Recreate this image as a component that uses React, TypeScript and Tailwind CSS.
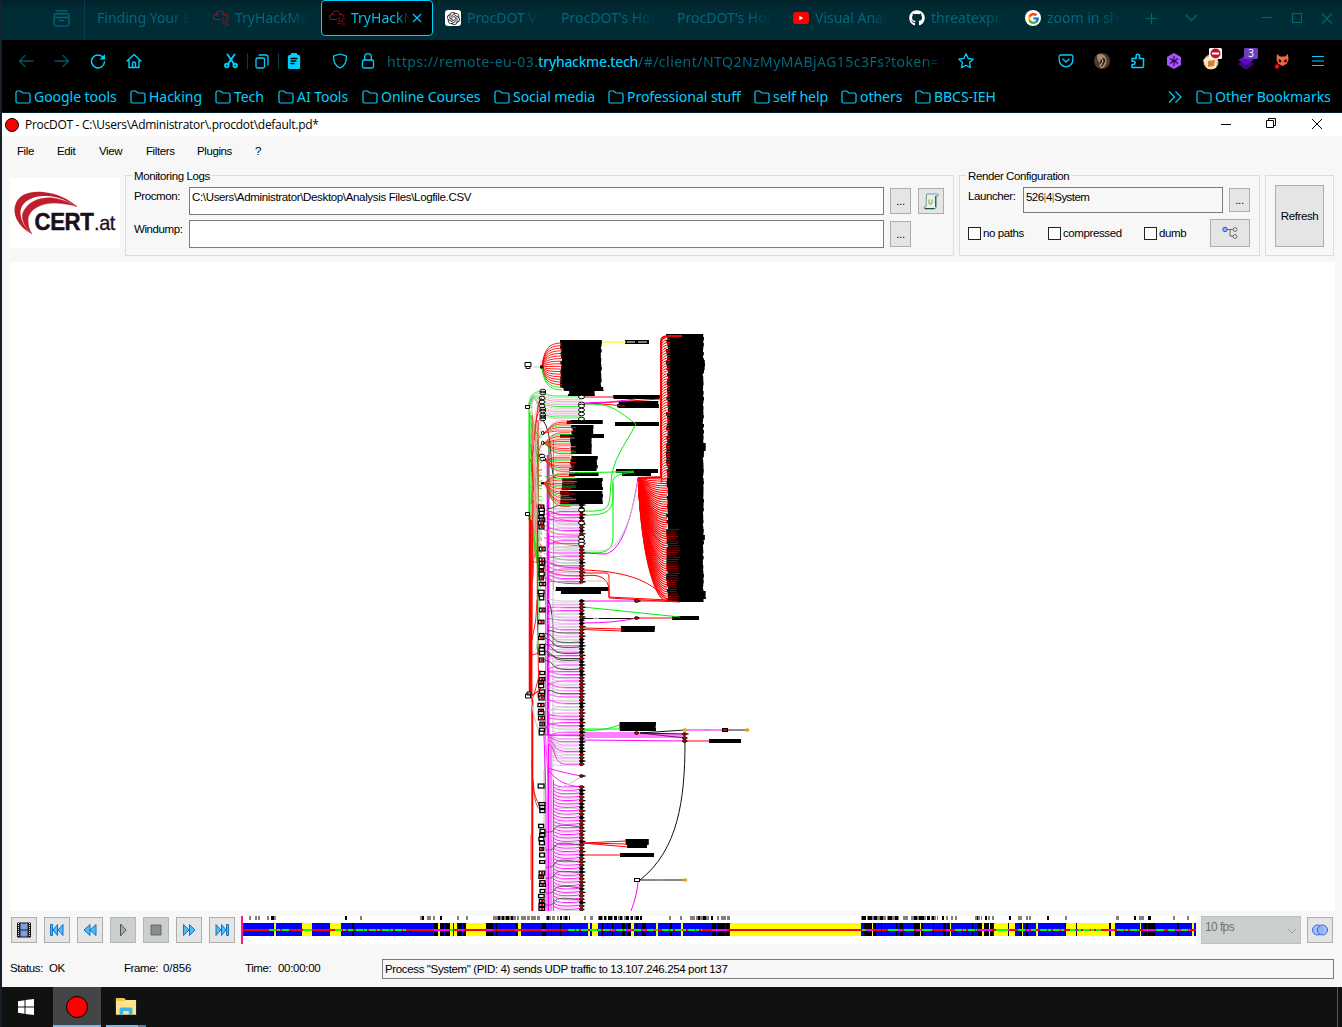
import React from "react";
import { SiTryhackme, SiOpenai } from "react-icons/si";
import { FaGithub } from "react-icons/fa";
import { FcGoogle } from "react-icons/fc";

const CY = "#00d0ff";

/* ---------- browser chrome ---------- */

function Icon({ children, size = 16, color = CY, w = 1.3 }: { children: React.ReactNode; size?: number; color?: string; w?: number }) {
  return (
    <svg width={size} height={size} viewBox="0 0 16 16" fill="none" stroke={color} strokeWidth={w} strokeLinecap="round" strokeLinejoin="round" className="shrink-0">
      {children}
    </svg>
  );
}

function Tab({ icon, label, active }: { icon?: React.ReactNode; label: string; active?: boolean }) {
  return (
    <div className="w-[116px] h-[40px] px-[2px] shrink-0">
      <div className={active ? "h-[36px] rounded-[4px] border border-[#00d0ff] bg-black flex items-center pl-[7px] pr-[10px]" : "h-[36px] flex items-center pl-[8px] pr-[8px]"}>
        {icon && <span className="w-4 h-4 mr-[6px] shrink-0 flex items-center justify-center">{icon}</span>}
        <span
          className={
            active
              ? "flex-1 h-5 leading-5 overflow-hidden whitespace-nowrap text-[14px] bg-linear-to-r from-[#00c8f5] from-75% to-black bg-clip-text text-transparent"
              : "flex-1 h-5 leading-5 overflow-hidden whitespace-nowrap text-[14px] bg-linear-to-r from-[#00687f] from-75% to-[#002a33] bg-clip-text text-transparent"
          }
        >
          {label}
        </span>
        {active && (
          <svg width="10" height="10" viewBox="0 0 10 10" stroke={CY} strokeWidth="1.1" className="shrink-0">
            <path d="M1 1l8 8M9 1l-8 8" />
          </svg>
        )}
      </div>
    </div>
  );
}

function TabStrip() {
  const thm = <SiTryhackme size={17} color="#b5141c" />;
  return (
    <div className="h-[40px] flex bg-linear-to-b from-[#00222a] to-[#002c36] to-30%">
      <div className="w-[83px] h-[40px] border-r border-[#003e4b] flex justify-center pl-[37px] pt-[10px]">
        <Icon size={17} color="#00647a">
          <path d="M3 .8h10M2.500 3.500h11A1.500 1.500 0 0 1 15 5v2H1V5a1.500 1.500 0 0 1 1.500-1.500zM1 7v6.500A1.700 1.700 0 0 0 2.700 15.200h10.600A1.700 1.700 0 0 0 15 13.500V7M6 10h4" />
        </Icon>
      </div>
      <div className="w-[2px]" />
      <Tab label="Finding Your E" />
      <Tab icon={thm} label="TryHackMe" />
      <Tab icon={thm} label="TryHackM" active />
      <Tab icon={<span className="w-4 h-4 rounded-[3px] bg-white flex items-center justify-center"><SiOpenai size={13} color="#222" /></span>} label="ProcDOT V" />
      <Tab label="ProcDOT's Hom" />
      <Tab label="ProcDOT's Hom" />
      <Tab icon={<svg width="16" height="12" viewBox="0 0 16 12"><rect width="16" height="12" rx="3" fill="#f00" /><path d="M6.400 3.700v4.600L10.200 6z" fill="#fff" /></svg>} label="Visual Anal" />
      <Tab icon={<FaGithub size={16} color="#fff" />} label="threatexpre" />
      <Tab icon={<span className="w-4 h-4 rounded-full bg-white flex items-center justify-center"><FcGoogle size={13} /></span>} label="zoom in she" />
      <div className="flex-1 h-[36px] flex items-center pl-[14px]">
        <svg width="190" height="14" viewBox="1145 11 190 14" fill="none" stroke="#00647a" strokeWidth="1.2">
          <path d="M1151.5 13v11M1146 18.5h11M1186 15l5.5 5.500 5.500-5.500M1262 17.500h10M1292.500 13.500h9v9h-9zM1322 13.500l10 10M1332 13.500l-10 10" />
        </svg>
      </div>
    </div>
  );
}

function Cell({ children }: { children: React.ReactNode }) {
  return <div className="w-[36px] h-[42px] flex items-center justify-center shrink-0">{children}</div>;
}

function Toolbar() {
  return (
    <div className="h-[42px] flex items-center pl-[6px]">
      <Cell><Icon color="#00566a"><path d="M15 8H1.500M7 2.500L1.500 8 7 13.500" /></Icon></Cell>
      <Cell><Icon color="#00566a"><path d="M1 8h13.500M9 2.500L14.500 8 9 13.500" /></Icon></Cell>
      <Cell><Icon w={1.5}><path d="M13.200 4.500A6.500 6.500 0 1 0 14.500 9" /><path d="M15 1v5.500H9.500z" fill={CY} stroke="none" /></Icon></Cell>
      <Cell><Icon w={1.4}><path d="M1 8l7-6.500L15 8M3 7v7.500h10V7M6.500 14.500v-4a1.500 1.500 0 0 1 3 0v4" /></Icon></Cell>
      <div className="w-[71px]" />
      <Icon w={1.9}><path d="M4.500 1.500L11 11M11.500 1.500L5 11" /><circle cx="3.800" cy="12.500" r="1.800" /><circle cx="12.200" cy="12.500" r="1.800" /></Icon>
      <div className="w-px h-4 bg-[#003e4b] ml-[8px] mr-[6px]" />
      <Icon><rect x="2" y="5" width="8.500" height="10" rx="1.500" /><path d="M5 2h7a2 2 0 0 1 2 2v8" /></Icon>
      <div className="w-px h-4 bg-[#003e4b] ml-[8px] mr-[7px]" />
      <Icon><rect x="2.500" y="2.500" width="11" height="13" rx="1.500" fill={CY} /><rect x="5.500" y="0.500" width="5" height="3" rx="1" fill={CY} /><path d="M5 5.500h6M5 8h5M5 10.500h3" stroke="#000" /></Icon>
      <div className="w-[30px]" />
      <Icon><path d="M8 1l6.500 2.200C14.700 9 12.500 13 8 15 3.500 13 1.300 9 1.500 3.200z" /></Icon>
      <div className="w-[12px]" />
      <Icon><rect x="2.500" y="7" width="11" height="8" rx="1.500" /><path d="M4.700 7V4a3.300 3.300 0 0 1 6.600 0v3" /></Icon>
      <div className="w-[564px] ml-[11px] text-[14px] tracking-[0.47px] whitespace-nowrap overflow-hidden bg-linear-to-r from-[#006a80] from-95% to-black bg-clip-text text-transparent">
        https://remote-eu-03.<span className="text-[#00d0ff] tracking-[-0.15px]">tryhackme.tech</span>/#/client/NTQ2NzMyMABjAG15c3Fs?token=1
      </div>
      <div className="w-[7px]" />
      <Icon><path d="M8 .8l2.200 4.700 5.100.6-3.800 3.500 1 5.100L8 12.200l-4.500 2.500 1-5.100L.7 6.100l5.100-.6z" /></Icon>
      <div className="flex-1" />
      <Cell><Icon><path d="M2.500 2h11a1.300 1.300 0 0 1 1.300 1.300V7A6.800 6.800 0 0 1 1.200 7V3.300A1.300 1.300 0 0 1 2.500 2zM4.800 6L8 9l3.200-3" /></Icon></Cell>
      <Cell>
        <svg width="16" height="16" viewBox="0 0 16 16"><circle cx="8" cy="8" r="8" fill="#4e3a2a" /><path d="M3 2q6-3 9 3 2 6-3 10-5 0-3-5-3-2-3-8z" fill="#a98a6c" /><path d="M7 5q5-1 4 4l-3 5-2-4z" fill="#2a1a10" /><path d="M7 4l2 4-2 4" stroke="#d8c4a8" fill="none" /></svg>
      </Cell>
      <Cell><Icon w={1.5}><path d="M2 14.500h10.500a1 1 0 0 0 1-1V5.500H9.500V3a1.700 1.700 0 0 0-3.400 0v2.500H2v2.700h1.500a1.600 1.600 0 0 1 0 3.300H2z" /></Icon></Cell>
      <Cell>
        <svg width="16" height="16" viewBox="0 0 16 16"><path d="M8 0l7 4v8l-7 4-7-4V4z" fill="#a855f7" /><path d="M8 3v10M4 5.500l8 5M12 5.500l-8 5M5.500 8h5" stroke="#2c0a5c" strokeWidth="1.200" /></svg>
      </Cell>
      <Cell>
        <svg width="20" height="22" viewBox="0 0 20 22" className="-mt-[5px] ml-[3px]"><circle cx="9" cy="14" r="7.500" fill="#e8b47c" /><path d="M1 12l5-3 9 2-1 9-8 1z" fill="#f6e7cf" /><path d="M6 13l7-1-1 6-6 1z" fill="#d9822b" /><rect x="7" y="0" width="13" height="11" rx="1.500" fill="#fff" /><circle cx="13.500" cy="5.500" r="5" fill="#c4122f" /><rect x="10" y="4.500" width="7" height="2" fill="#fff" /></svg>
      </Cell>
      <Cell>
        <svg width="20" height="22" viewBox="0 0 20 22" className="-mt-[5px] ml-[3px]"><path d="M8 11l8 5-8 6-8-6z" fill="#3b0a80" /><path d="M8 7l8 5-8 5-8-5z" fill="#5c0bc0" /><rect x="6" y="0" width="14" height="11" rx="1.500" fill="#6a3fc0" /><text x="13" y="9" fontSize="10" fill="#fff" textAnchor="middle" fontFamily="Noto Sans">3</text></svg>
      </Cell>
      <Cell>
        <svg width="16" height="16" viewBox="0 0 16 16"><path d="M3 1l3 2.500h5L14 1l.5 6-2 4-4 2-4-2-2-4z" fill="#f4653a" /><path d="M4.500 6l3 1.500-.5 2-2-.5zM12.500 6l-2.500 1.500.5 2 2-.5z" fill="#000" /><circle cx="3" cy="13.500" r="2.200" fill="#f00" /></svg>
      </Cell>
      <Cell>
        <svg width="12" height="12" viewBox="0 0 12 12" stroke={CY} strokeWidth="1.200"><path d="M0 1.500h12M0 6h12M0 10.500h12" /></svg>
      </Cell>
      <div className="w-[6px]" />
    </div>
  );
}

function Folder() {
  return (
    <svg width="16" height="14" viewBox="0 0 16 14" fill="none" stroke={CY} strokeWidth="1.200" className="shrink-0 mr-[3px] mt-px">
      <path d="M1 2.500A1.500 1.500 0 0 1 2.500 1h3L8 3h5.500A1.500 1.500 0 0 1 15 4.500v7a1.500 1.500 0 0 1-1.500 1.500h-11A1.500 1.500 0 0 1 1 11.500z" />
    </svg>
  );
}

function Bookmark({ label, w }: { label: string; w: number }) {
  return (
    <div className="flex items-center whitespace-nowrap shrink-0" style={{ width: w }}>
      <Folder />
      {label}
    </div>
  );
}

const bookmarks: [string, number][] = [
  ["Google tools", 115], ["Hacking", 85], ["Tech", 63], ["AI Tools", 84], ["Online Courses", 132],
  ["Social media", 114], ["Professional stuff", 146], ["self help", 87], ["others", 74], ["BBCS-IEH", 90],
];

function Bookmarks() {
  return (
    <div className="h-[30px] flex items-center pl-[13px] pb-px text-[14px] tracking-[-0.04px] text-[#00d0ff]">
      {bookmarks.map(([l, w]) => <Bookmark key={l} label={l} w={w} />)}
      <div className="flex-1" />
      <svg width="14" height="12" viewBox="0 0 14 12" fill="none" stroke={CY} strokeWidth="1.200" className="mr-[14px]"><path d="M1 .5L6.500 6 1 11.500M7.500 .5L13 6 7.500 11.500" /></svg>
      <Bookmark label="Other Bookmarks" w={146} />
    </div>
  );
}

/* ---------- application window ---------- */

function Group({ title, className, children }: { title?: string; className: string; children: React.ReactNode }) {
  return (
    <div className={"h-[81px] border border-[#dcdcdc] shrink-0 " + className}>
      <div className="h-[11px] pl-[6px]">
        {title && <span className="inline-block h-4 leading-4 -mt-[8px] px-[2px] bg-[#f7f7f7] align-top whitespace-nowrap">{title}</span>}
      </div>
      {children}
    </div>
  );
}

function Btn({ children, className }: { children?: React.ReactNode; className: string }) {
  return <div className={"border border-[#adadad] bg-[#e5e5e5] flex items-center justify-center shrink-0 " + className}>{children}</div>;
}

function Check({ label, className }: { label: string; className: string }) {
  return (
    <div className={"flex items-center whitespace-nowrap shrink-0 " + className}>
      <span className="w-[13px] h-[13px] border border-[#222] bg-white mr-[2px]" />
      {label}
    </div>
  );
}

function CertLogo() {
  return (
    <svg width="110" height="70" viewBox="10 178 110 70" className="bg-white shrink-0">
      <path d="M32 234C17 226 13 214 15 206 18 194 30 191 43 192 57 193 70 200 77 206.500 68 201 57 195.500 45 196 32 196 21 202 20.500 212 20.500 221 25 228 32 234z" fill="#be1e2d" />
      <path d="M32 234C22 225 20 215 25 209 31 200 42 197 53 198 63 199.500 71 203 77 206.500 66 203.500 54 202 45 204 34 207 28 213 28 220 28 225 29 230 32 234z" fill="#be1e2d" stroke="#be1e2d" strokeWidth=".5" />
      <text x="34.500" y="229.500" fontSize="24.500" fontWeight="bold" fill="#1a1118" stroke="#1a1118" strokeWidth=".5" fontFamily="Liberation Sans" textLength="59" lengthAdjust="spacingAndGlyphs">CERT</text>
      <text x="94" y="229.500" fontSize="21" fill="#1a1118" stroke="#1a1118" strokeWidth=".3" fontFamily="Liberation Sans" textLength="21" lengthAdjust="spacingAndGlyphs">.at</text>
    </svg>
  );
}

function Config() {
  return (
    <div className="h-[87px] flex pl-[8px] shrink-0">
      <div className="pt-[3px]"><CertLogo /></div>
      <Group title="Monitoring Logs" className="w-[829px] ml-[5px]">
        <div className="flex pl-[8px]">
          <div className="w-[55px] h-[28px] pt-[2px]">Procmon:</div>
          <div className="w-[695px] h-[28px] border border-[#7a7a7a] bg-white pl-[2px] pt-[2px] tracking-[-0.34px]">C:\Users\Administrator\Desktop\Analysis Files\Logfile.CSV</div>
          <Btn className="w-[21px] h-[26px] ml-[6px] mt-px">...</Btn>
          <Btn className="w-[26px] h-[26px] ml-[7px] mt-px">
            <svg width="16" height="17" viewBox="0 0 16 17"><path d="M3.500 1h10.500q1.500 0 1 2h-2v11.500q0 1.500-2 1.500H2q-1.500 0-1-2h2z" fill="#e2f2ec" stroke="#6f9f98" /><path d="M2 15.500h9.500M12.700 3v11" stroke="#1f4a44" /><path d="M6 6.500v3q0 1.500 1.500 1.500T9 9.500v-3" fill="none" stroke="#c4a63a" strokeWidth="1.300" /></svg>
          </Btn>
        </div>
        <div className="flex pl-[8px] mt-[5px]">
          <div className="w-[55px] pt-[2px]">Windump:</div>
          <div className="w-[695px] h-[28px] border border-[#7a7a7a] bg-white" />
          <Btn className="w-[21px] h-[26px] ml-[6px] mt-px">...</Btn>
        </div>
      </Group>
      <Group title="Render Configuration" className="w-[301px] ml-[5px]">
        <div className="flex pl-[8px]">
          <div className="w-[55px] pt-[2px]">Launcher:</div>
          <div className="w-[200px] h-[26px] border border-[#7a7a7a] pl-[2px] pt-[2px] tracking-[-0.55px]">526<span className="text-[#c96f1c]">|</span>4<span className="text-[#c96f1c]">|</span>System</div>
          <Btn className="w-[21px] h-[24px] ml-[6px] mt-px">...</Btn>
        </div>
        <div className="flex items-center pl-[8px] mt-[6px]">
          <Check label="no paths" className="w-[80px]" />
          <Check label="compressed" className="w-[96px]" />
          <Check label="dumb" className="w-[66px]" />
          <Btn className="w-[40px] h-[28px]">
            <svg width="16" height="14" viewBox="0 0 16 14" fill="none" stroke="#666"><path d="M5 3.500h6M8 3.500v6.500h3" /><circle cx="3" cy="3.500" r="2.200" fill="#8fb1ff" stroke="#2c55c8" /><circle cx="13" cy="3.500" r="1.900" fill="#eee" /><circle cx="13" cy="10.500" r="1.900" fill="#eee" /></svg>
          </Btn>
        </div>
      </Group>
      <Group className="w-[69px] ml-[5px]">
        <Btn className="w-[49px] h-[62px] ml-[9px] -mt-[2px]">Refresh</Btn>
      </Group>
    </div>
  );
}

/* ---------- graph ---------- */

type P = { d: string; c: string; w?: number };
type R = [number, number, number, number];

function makeRandom(seed: number) {
  let s = seed;
  return () => {
    s = (s * 16807) % 2147483647;
    return s / 2147483647;
  };
}

const M = "#ff00ff", G = "#00f000", D = "#ff0000", K = "#111111", L = "#c8c8c8";

function buildGraph() {
  const rnd = makeRandom(77);
  const back: P[] = [];
  const lines: P[] = [];
  const blocks: R[] = [];
  const nodes: { x: number; y: number; r: boolean }[] = [];
  const boxes: { x: number; y: number; w: number; h: number; r: boolean }[] = [];
  const rough = (x0: number, x1: number, y0: number, y1: number, j: number) => {
    for (let y = y0; y < y1; y += 3) {
      const a = rnd() * j;
      blocks.push([x0 + a, y, x1 - x0 - a - rnd() * j * 0.6, Math.min(3.4, y1 - y)]);
    }
  };

  rough(560, 602, 340, 388, 2); rough(563, 604, 387, 391, 2); rough(567, 595, 391, 396, 3);
  rough(666, 704, 334, 602, 2); rough(666, 705, 360, 370, 1); rough(666, 706, 443, 451, 1); rough(666, 705, 535, 540, 1); rough(668, 706, 591, 599, 1);
  rough(613, 660, 395, 399, 1); rough(617, 659, 401, 408, 3); rough(615, 659, 422, 426, 0);
  rough(566, 603, 420, 424, 1); rough(570, 594, 425, 434, 3); rough(560, 604, 434, 438, 0); rough(570, 592, 438, 454, 1);
  rough(569, 598, 456, 471, 3); rough(566, 600, 472, 476, 3); rough(561, 603, 478, 490, 2); rough(559, 603, 491, 504, 2);
  rough(616, 658, 469, 473, 0); rough(622, 651, 473, 476, 0);
  rough(555, 609, 587, 591, 1); rough(561, 601, 591, 594, 0);
  rough(620, 655, 626, 632, 1); rough(672, 699, 616, 620, 0);
  rough(619, 656, 722, 731, 1); rough(709, 741, 739, 743, 0);
  rough(625, 649, 839, 845, 1); rough(627, 647, 845, 848, 0); rough(620, 654, 853, 857, 0);
  rough(625, 649, 340, 344, 0);

  for (let y = 343; y < 391; y += 2.6) lines.push({ d: `M542 367C544 ${367 + (y - 367) * 0.8} 550 ${y} 562 ${y}`, c: y > 386 ? G : D, w: 0.9 });
  for (let y = 337; y < 478; y += 2.6) lines.push({ d: `M661 ${y + 6}Q662 ${y} 670 ${y}`, c: D, w: 1 });
  for (let y = 479; y < 602; y += 2.3) {
    const f = (y - 479) / 122;
    lines.push({ d: `M638 478C${642 + 6 * (1 - f)} ${478 + (y - 478) * 0.7} ${652 + 4 * f} ${y} 667 ${y}`, c: D, w: 1.1 });
    if (y > 528) lines.push({ d: `M667 ${y}h${9 + rnd() * 4}`, c: D, w: 0.6 });
  }
  lines.push({ d: "M638 478L661 477V342Q661 335 672 336H682", c: D, w: 2 });
  lines.push({ d: "M583 397H614M583 404L660 399M590 403L625 406", c: D });
  lines.push({ d: "M583 403Q610 403 636 399", c: M });
  lines.push({ d: "M602 342H626", c: "#ffff00", w: 1.2 });
  lines.push({ d: "M583 404C610 404 612 406 636 424C625 445 612 460 611 482C609 508 612 512 583 511", c: G });
  lines.push({ d: "M583 515C620 517 612 500 613 480Q614 474 634 472H615M583 552C608 555 613 550 613 535V483M545 477C570 470 590 474 634 471", c: G });
  lines.push({ d: "M638 478C630 530 618 552 605 554L583 553", c: M });
  lines.push({ d: "M638 482C630 525 620 550 600 551L583 551", c: L });
  lines.push({ d: "M583 570C620 571 650 578 668 601M583 573H606Q609 573 609 578V597L668 600M583 576Q608 572 609 590V598L680 602", c: D });
  lines.push({ d: "M583 581H609", c: L });
  lines.push({ d: "M583 601H640", c: M });
  lines.push({ d: "M637 601H672M637 618H674M583 628L622 629M583 629.500L622 631M686 741H710M583 843L626 841M583 843L626 844M583 843L628 847M583 855H621", c: D });
  lines.push({ d: "M583 607L680 617M583 730Q600 732 620 725M583 729H620", c: G });
  lines.push({ d: "M583 618.500H637M640 733L685 730M640 733L685 734M640 733L685 738M727 730H745M637 880H685", c: K });
  lines.push({ d: "M583 623Q615 623 637 618M583 733L637 733M583 737L685 737M583 740L685 741M545 735H685M687 730H725M638 882Q637 895 631 911", c: M });
  lines.push({ d: "M685 742C685 800 678 850 640 880", c: K });
  lines.push({ d: "M593 618.500h6M657 880h7M704 730h6M732 730h5", c: "#999", w: 1.2 });

  for (let i = 0; i < 12; i++) back.push({ d: `M${528 + rnd() * 4} 408C${527 + i} ${394 - i} 535 ${392 + i * 1.5} 542 ${391 + i * 2.5}`, c: i % 3 ? L : G, w: 0.8 });
  for (let i = 0; i < 56; i++) {
    const y = 398 + rnd() * 185, y2 = 395 + rnd() * 175;
    back.push({ d: `M${529 + rnd() * 4} ${y}C535 ${y} 533 ${y2} 542 ${y2}`, c: [G, D, L, "#ff9a9a"][i % 4], w: 0.8 });
  }
  for (let i = 0; i < 64; i++) {
    const y = 396 + i * 1.75;
    const hub = y < 420 ? y - 2 : y < 432 ? 433 : y < 455 ? 443 : y < 472 ? 460 : 483;
    const end = y < 419 ? 581 : 568 + rnd() * 9;
    (y < 419 ? back : lines).push({ d: `M543 ${hub}C548 ${hub} 549 ${y} ${y < 419 ? 558 : 562} ${y}H${end}`, c: y < 419 ? [G, L, L, "#ff8080", L, "#f080f0"][i % 6] : [D, D, G, D, "#ff9a9a"][i % 5], w: 0.8 });
  }
  for (let y = 506; y < 580; y += 4) back.push({ d: `M544 ${y}C552 ${y} 550 ${y + 6} 581 ${y + 5 + rnd() * 3}`, c: [G, L, D, L, K][Math.floor(rnd() * 5)], w: 0.7 });
  back.push({ d: "M529 408V520M530 412V690M538 440V655M529 512L540 580M532 520L540 575", c: G, w: 1.1 });
  back.push({ d: "M532 415V695M538 420V500Q536 600 539 690M533 500L531 695M530 515L531 695L533 705", c: D, w: 0.9 });
  back.push({ d: "M529.500 516V695M531 520V697", c: D, w: 1.5 });
  back.push({ d: "M531.500 695L541 690M531 697L541 688M532 640Q537 620 537 600M532 655L539 653M532 700Q536 690 540 670", c: D, w: 0.9 });
  back.push({ d: "M532.300 700V911", c: D, w: 2 });
  back.push({ d: "M532 760Q532 800 541 806M533 780Q534 808 541 810", c: D, w: 0.8 });
  back.push({ d: "M530.500 835V880", c: "#ff9a9a", w: 1 });
  back.push({ d: "M531 700Q536 730 541 733M534 440Q545 600 536 650M545 745Q544 790 544 830M544 770V800", c: L, w: 1.2 });
  back.push({ d: "M547.500 455V735M548.500 500V911", c: M, w: 1.7 });
  back.push({ d: "M545.500 560V735L548 780V911M553.500 440V590", c: M, w: 0.7 });
  back.push({ d: "M544 736Q545 760 546 800V911M551 735V911M542 735L548 725", c: M, w: 1 });
  back.push({ d: "M543 420Q550 430 551 455T556 478M548 600Q554 610 553 646M549 440V500", c: K, w: 0.9 });
  back.push({ d: "M553 560V911", c: L, w: 1 });
  back.push({ d: "M553.500 780V911", c: M, w: 0.9 });

  let i = 0;
  for (let y = 505; y < 911; y += y > 780 ? 3.4 : 3.2) {
    i++;
    if ((y > 584 && y < 599) || (y > 766 && y < 785)) continue;
    const r = rnd();
    const c = r < 0.45 ? M : r < 0.8 ? L : r < 0.93 && y < 720 ? K : "#ec8cec";
    const dy = y > 730 && y < 770 ? -(y - 736) * 0.7 : -4 + rnd() * 8;
    if (y > 785) back.push({ d: `M553 ${y - 4}Q556 ${y} 566 ${y}T580 ${y - 1}`, c: M, w: 0.9 });
    else back.push({ d: `M548 ${y + dy}C556 ${y + dy} 552 ${y} 566 ${y}H580`, c, w: 0.9 });
    back.push({ d: `M552 ${y - 2 + rnd() * 3}Q560 ${y + 1.5} 580 ${y + 1}`, c: i % 2 ? L : "#f09cf0", w: 0.7 });
    nodes.push({ x: 582, y, r: rnd() < 0.55 });
  }
  back.push({ d: "M548 768Q560 772 581 776M548 770Q560 786 581 787", c: M, w: 0.9 });
  back.push({ d: "M549 790Q565 788 581 777", c: L });
  [827, 845, 862, 873, 888, 900].forEach((y) => back.push({ d: `M546 ${y + 5}Q553 ${y + 6} 555 ${y + 1}T580 ${y}`, c: "#555", w: 0.9 }));
  [642, 647, 653, 660, 669].forEach((y) => back.push({ d: `M545 ${y - 9}Q551 ${y - 8} 554 ${y - 3}T580 ${y}`, c: "#444", w: 0.9 }));

  const addBox = (y: number, r: boolean) => boxes.push({ x: 541 + rnd() * 1.5, y, w: 4 + rnd() * 2, h: 2.6 + rnd() * 1.4, r });
  [507, 510, 513, 517, 520, 523, 527, 549, 560, 563, 567, 571, 574, 578, 584, 592, 595, 598, 610, 622, 635, 638, 646, 650, 653, 660, 673, 679, 682, 686, 692, 695, 698, 705, 711, 713, 718, 724, 730, 733].forEach((y) => addBox(y, rnd() < 0.5));
  [786, 804, 807, 811, 826, 831, 835, 839, 843, 849, 855, 862, 873, 877, 882, 885, 891, 896, 901, 905, 909].forEach((y) => addBox(y, y % 4 === 1));
  [[637, 601], [637, 618], [637, 733], [685, 734], [685, 738], [685, 741], [582, 776]].forEach(([x, y]) => nodes.push({ x, y, r: true }));
  return { back, lines, blocks, nodes, boxes };
}

const graph = buildGraph();

function GraphCanvas() {
  const line = (p: P, i: number) => <path key={i} d={p.d} stroke={p.c} strokeWidth={p.w ?? 1} />;
  return (
    <svg width="1325" height="649" viewBox="10 262 1325 649" fill="none" className="block">
      {graph.back.map(line)}
      {graph.blocks.map(([x, y, w, h], i) => <rect key={i} x={x} y={y} width={w} height={h} fill="#000" />)}
      {graph.lines.map(line)}
      <path d="M627 342h8M638 342h9" stroke="#fff" strokeWidth="1.200" />
      {graph.nodes.map((n, i) => (
        <g key={i}>
          <path d={`M${n.x - 2.5} ${n.y}h${i % 3 ? 5 : 6}`} stroke="#000" strokeWidth="1.300" />
          <ellipse cx={n.x - 0.5} cy={n.y} rx="1.900" ry="1.500" fill={n.r ? "#c00" : "#000"} stroke="#000" strokeWidth=".7" />
        </g>
      ))}
      {graph.boxes.map((n, i) => (
        <g key={i}>
          <rect x={n.x - n.w / 2} y={n.y - n.h / 2} width={n.w} height={n.h} fill="#fff" stroke="#000" strokeWidth="1.300" />
          {n.r && <rect x={n.x - 1} y={n.y - 1} width="2.500" height="2" fill="#c00" />}
        </g>
      ))}
      {[391, 393, 398, 402, 406, 409, 411, 415, 417, 419, 433, 443, 456, 459].map((y) => <ellipse key={y} cx={542 + (y % 2) * 0.8} cy={y} rx={y === 433 || y === 443 ? 1.5 : 3} ry="1.800" stroke="#000" strokeWidth=".9" />)}
      <rect x="541" y="482" width="3" height="2.500" fill="#300" />
      {[397, 404, 406, 410, 414, 419, 510, 523, 537, 541, 544].map((y) => <ellipse key={y} cx="581.500" cy={y} rx="3" ry="1.800" stroke="#000" fill="#fff" />)}
      <path d="M525 362.500h6v4h-6zM526 366.500h4v2h-4zM525.500 405.500h4v3h-4zM525.500 512.500h4v3h-4zM525.500 694h5v4h-5zM527 692h4v3h-4z" stroke="#000" fill="#fff" />
      <rect x="540" y="365.500" width="3.500" height="3" fill="#300" />
      <path d="M533 367h7" stroke={L} />
      <rect x="634.500" y="878.500" width="5" height="3" stroke="#000" fill="#fff" />
      <rect x="722.500" y="728.500" width="5" height="3" stroke="#000" fill="#c00" />
      {[[685, 730], [747, 730], [685, 880]].map(([x, y]) => <ellipse key={x + y} cx={x} cy={y} rx="2.500" ry="1.800" fill="#e8a020" />)}
    </svg>
  );
}

/* ---------- playback controls ---------- */

const yellow = [[274, 2], [302, 10], [330, 11], [438, 2], [450, 3], [454, 3], [466, 20], [518, 3], [588, 2], [592, 6], [631, 3], [656, 2], [681, 2], [730, 131], [872, 1], [920, 1], [950, 1], [982, 2], [989, 1], [994, 21], [1022, 1], [1036, 2], [1066, 43], [1111, 4], [1140, 1], [1192, 2]];
const black = [[273, 1], [352, 2], [434, 4], [440, 4], [445, 5], [458, 4], [463, 3], [486, 7], [496, 1], [516, 1], [542, 4], [551, 1], [560, 1], [602, 1], [607, 1], [612, 1], [622, 3], [628, 3], [636, 1], [642, 4], [670, 2], [712, 4], [717, 8], [726, 3], [864, 8], [873, 3], [881, 1], [896, 1], [900, 3], [914, 6], [921, 2], [933, 1], [943, 3], [947, 2], [972, 1], [978, 4], [984, 5], [990, 3], [1008, 1], [1020, 2], [1026, 2], [1065, 1], [1076, 1], [1109, 2], [1117, 1], [1143, 4], [1148, 7], [1177, 2]];
const greyTicks = [[249, 2], [255, 2], [258, 2], [267, 2], [274, 2], [360, 2], [420, 2], [427, 4], [433, 2], [457, 2], [466, 2], [493, 23], [517, 2], [521, 20], [546, 9], [557, 2], [563, 7], [584, 2], [590, 3], [598, 25], [624, 8], [634, 8], [669, 2], [680, 2], [690, 20], [717, 2], [721, 9], [861, 38], [903, 6], [911, 27], [946, 2], [951, 2], [955, 2], [975, 7], [988, 2], [992, 2], [1018, 4], [1026, 2], [1029, 2], [1065, 2], [1116, 3], [1139, 6], [1173, 2], [1187, 2]];
const blackTicks = [[271, 3], [345, 2], [422, 2], [440, 2], [498, 2], [502, 2], [506, 3], [511, 2], [547, 2], [560, 2], [565, 2], [569, 1], [599, 3], [604, 2], [608, 4], [614, 3], [620, 2], [626, 3], [631, 2], [636, 3], [640, 2], [698, 2], [703, 3], [711, 2], [862, 4], [868, 4], [874, 3], [880, 3], [888, 4], [895, 3], [914, 3], [919, 5], [927, 3], [932, 2], [942, 2], [977, 1], [985, 2], [1009, 2], [1047, 2], [1134, 2], [1148, 3]];
const greenRanges = [[269, 20], [303, 9], [335, 18], [356, 52], [450, 3], [568, 20], [590, 40], [634, 26], [662, 40], [862, 4], [888, 10], [904, 10], [922, 10], [955, 22], [996, 12], [1018, 18], [1040, 26], [1070, 31], [1117, 22], [1156, 8], [1168, 22]];
const magentaRanges = [[434, 16], [457, 7], [486, 7], [515, 3], [542, 4], [612, 3], [626, 6], [642, 4], [712, 15], [866, 8], [898, 5], [916, 6], [946, 4], [978, 14], [1008, 2], [1026, 3], [1075, 2], [1108, 6], [1143, 12], [1176, 4]];

function Timeline() {
  return (
    <svg width="955" height="28" viewBox="241 916 955 28" shapeRendering="crispEdges" className="bg-white shrink-0">
      <rect x="241" y="923" width="955" height="13" fill="#0000ff" />
      {yellow.map(([x, w]) => <rect key={x} x={x} y="923" width={w} height="13" fill="#ffff00" />)}
      {black.map(([x, w]) => <rect key={x} x={x} y="923" width={w} height="13" fill="#000" />)}
      <rect x="241" y="929" width="955" height="2" fill="#ff0000" />
      {greenRanges.map(([x, w]) => <path key={x} d={`M${x} 930h${w}`} stroke="#00ff00" strokeWidth="2" strokeDasharray={w > 14 ? "7 1 3 2" : undefined} />)}
      {magentaRanges.map(([x, w]) => <rect key={x} x={x} y="929" width={w} height="2" fill="#ff00ff" />)}
      {greyTicks.map(([x, w]) => <path key={x} d={`M${x} 918h${w}`} stroke="#808080" strokeWidth="4" strokeDasharray={w > 4 ? "5 1 3 1" : undefined} />)}
      {blackTicks.map(([x, w]) => <rect key={x} x={x} y="916" width={w} height="4" fill="#000" />)}
      <rect x="241" y="916" width="2" height="28" fill="#ff1493" />
    </svg>
  );
}

function PlayBtn({ children, off }: { children: React.ReactNode; off?: boolean }) {
  return (
    <div className={off ? "w-[26px] h-[26px] mr-[7px] border border-[#b4b8b4] bg-[#ccd0cc] flex items-center justify-center shrink-0" : "w-[26px] h-[26px] mr-[7px] border border-[#adadad] bg-[#e5e5e5] flex items-center justify-center shrink-0"}>
      <svg width="16" height="16" viewBox="0 0 16 16" fill="#4fbcf8" stroke="#1673c0" strokeWidth="1" strokeLinejoin="round">
        {children}
      </svg>
    </div>
  );
}

function Controls() {
  return (
    <div className="h-[45px] flex pl-[9px] pt-[5px] shrink-0">
      <div className="flex pt-px w-[230px] shrink-0">
        <PlayBtn>
          <rect x="1.500" y="1" width="13" height="14" fill="#222" stroke="#111" />
          <path d="M4.500 1.500h7v6h-7zM4.500 8.500h7v6h-7z" fill="#7d9fe0" stroke="none" />
          <path d="M2.500 1v14M13.500 1v14" stroke="#ddd" strokeDasharray="1 1" />
        </PlayBtn>
        <PlayBtn><path d="M1.500 2.500v11H3.500v-11zM8.500 2.500v11L4 8zM14 2.500v11L9 8z" /></PlayBtn>
        <PlayBtn><path d="M8 2.500v11L2 8zM14 2.500v11L8 8z" /></PlayBtn>
        <PlayBtn off><path d="M5.500 2l5.500 6-5.500 6z" fill="#aaa" stroke="#555" /></PlayBtn>
        <PlayBtn off><path d="M3 3h10v10H3z" fill="#8c8c8c" stroke="#666" /></PlayBtn>
        <PlayBtn><path d="M2.500 2.500v11L8 8zM8.500 2.500v11L14 8z" /></PlayBtn>
        <PlayBtn><path d="M14.500 2.500v11h-2v-11zM7.500 2.500v11L12 8zM2 2.500v11L7 8z" /></PlayBtn>
      </div>
      <Timeline />
      <div className="w-[100px] h-[28px] ml-[5px] border border-[#bcc2bc] bg-[#ccd0cc] text-[#707070] text-[12px] tracking-[-0.6px] flex justify-between pl-[3px] pr-[3px]">
        <span className="pt-[3px]">10 fps</span>
        <svg width="10" height="6" viewBox="0 0 10 6" fill="none" stroke="#a0a4a0" className="mt-[11px]"><path d="M1 1l4 4 4-4" /></svg>
      </div>
      <Btn className="w-[26px] h-[26px] ml-[6px] mt-px">
        <svg width="16" height="12" viewBox="0 0 16 12" fill="#8fb4ff" fillOpacity=".8" stroke="#3a66d8"><circle cx="5.500" cy="6" r="5" /><circle cx="10.500" cy="6" r="5" /></svg>
      </Btn>
    </div>
  );
}

function Taskbar() {
  return (
    <div className="h-[40px] bg-[#101212] flex shrink-0">
      <div className="w-[51px] flex items-center justify-center pr-[3px]">
        <svg width="16" height="16" viewBox="0 0 16 16" fill="#fff"><path d="M0 2.200L6.500 1.300v6.200H0zM7.500 1.100L16 0v7.500H7.500zM0 8.500h6.500v6.200L0 13.800zM7.500 8.500H16V16l-8.500-1.100z" /></svg>
      </div>
      <div className="w-[48px] bg-[#444546] border-b-2 border-[#76b9ed] flex items-center justify-center">
        <div className="w-[22px] h-[22px] rounded-full bg-[#ff0000] border border-black mt-px" />
      </div>
      <div className="w-[5px]" />
      <div className="w-[32px] border-b-2 border-[#76b9ed] flex items-center justify-end">
        <svg width="22" height="19" viewBox="0 0 24 20" className="mt-px mr-px"><path d="M1 1h9l2 2h11v16H1z" fill="#fde28f" /><path d="M1 1h9l1 3H1z" fill="#f3c548" /><path d="M5 19v-6q0-2 2-2h10q2 0 2 2v6h-4v-4H9v4z" fill="#3cb4e8" /></svg>
      </div>
      <div className="w-[8px] border-b-2 border-[#4d7ea5]" />
      <div className="flex-1 border-r border-[#555] mr-[4px]" />
    </div>
  );
}

export default function App() {
  return (
    <div className="w-[1342px] h-[1027px] bg-black overflow-hidden border-l-2 border-[#15202a] flex flex-col font-['Noto_Sans',sans-serif]">
      <TabStrip />
      <Toolbar />
      <Bookmarks />
      <div className="h-[24px] bg-white border-t border-[#00232b] flex items-center pl-[3px] text-black shrink-0 text-[12px]">
        <div className="w-[14px] h-[14px] rounded-full bg-[#ff0000] border border-black mr-[6px]" />
        <span className="font-['Open_Sans',sans-serif] tracking-[-0.28px] pt-px">ProcDOT - C:\Users\Administrator\.procdot\default.pd*</span>
        <div className="flex-1" />
        <svg width="104" height="12" viewBox="1221 118 104 12" fill="none" stroke="#000" className="mr-[17px] mb-[2px]"><path d="M1221 124.500h10M1266.500 120.500h7v7h-7zM1268.500 120v-1.500h7v7h-2M1312 119l10 10M1322 119l-10 10" /></svg>
      </div>
      <div className="flex-1 bg-[#f7f7f7] text-black text-[11.5px] tracking-[-0.4px] leading-[14px] font-['Liberation_Sans',sans-serif] flex flex-col">
        <div className="h-[39px] flex pl-[15px] pt-[8px] shrink-0">
          <span className="w-[40px]">File</span>
          <span className="w-[42px]">Edit</span>
          <span className="w-[47px]">View</span>
          <span className="w-[51px]">Filters</span>
          <span className="w-[58px]">Plugins</span>
          <span>?</span>
        </div>
        <Config />
        <div className="ml-[8px] w-[1325px] h-[649px] bg-white shrink-0">
          <GraphCanvas />
        </div>
        <Controls />
        <div className="flex pl-[8px] pt-[2px] h-[31px]">
          <span className="w-[39px] pt-[3px]">Status:</span>
          <span className="w-[75px] pt-[3px]">OK</span>
          <span className="w-[39px] pt-[3px]">Frame:</span>
          <span className="w-[82px] pt-[3px] tracking-[-0.1px]">0/856</span>
          <span className="w-[33px] pt-[3px]">Time:</span>
          <span className="w-[104px] pt-[3px] tracking-[-0.3px]">00:00:00</span>
          <div className="w-[952px] h-[20px] border border-[#7a7a7a] pl-[2px] pt-[2px] mt-px tracking-[-0.36px]">Process "System" (PID: 4) sends UDP traffic to 13.107.246.254 port 137</div>
        </div>
      </div>
      <Taskbar />
    </div>
  );
}
